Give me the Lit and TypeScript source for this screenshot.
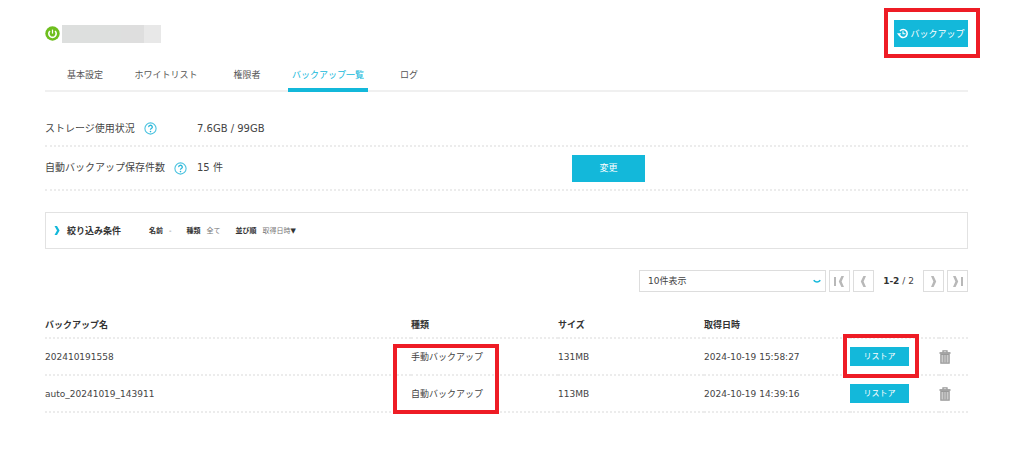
import { LitElement, html, svg, css } from "lit";
import { customElement, state } from "lit/decorators.js";
import { classMap } from "lit/directives/class-map.js";

interface Backup {
  name: string;
  type: string;
  size: string;
  date: string;
}

const TABS = ["基本設定", "ホワイトリスト", "権限者", "バックアップ一覧", "ログ"];

const BACKUPS: Backup[] = [
  { name: "202410191558", type: "手動バックアップ", size: "131MB", date: "2024-10-19 15:58:27" },
  { name: "auto_20241019_143911", type: "自動バックアップ", size: "113MB", date: "2024-10-19 14:39:16" },
];

const powerIcon = html`<svg width="15" height="15" viewBox="0 0 15 15" aria-hidden="true">
  <circle cx="7.5" cy="7.5" r="7.2" fill="#6ebe1e" />
  <path d="M4.9 5a3.7 3.7 0 1 0 5.2 0" fill="none" stroke="#fff" stroke-width="1.6" />
  <path d="M7.5 3.6v4" stroke="#fff" stroke-width="1.2" />
</svg>`;

const historyIcon = html`<svg width="11" height="11" viewBox="0 0 11 11" aria-hidden="true">
  <path d="M2.2 6.2A4 4 0 1 0 3 3" fill="none" stroke="#fff" stroke-width="1.5" />
  <path d="M0 5.2h4.2L2.1 8z" fill="#fff" />
  <path d="M6 3.2v2.6h2.4" fill="none" stroke="#fff" stroke-width="1.1" />
</svg>`;

const helpIcon = html`<svg width="13" height="13" viewBox="0 0 13 13" aria-hidden="true">
  <circle cx="6.5" cy="6.5" r="5.6" fill="#fff" stroke="#4cc3e0" stroke-width="1.1" />
  <path d="M4.7 5.1a1.8 1.7 0 1 1 2.6 1.4q-.8.4-.8 1.3" fill="none" stroke="#27b5d8" stroke-width="1.3" />
  <circle cx="6.5" cy="9.6" r=".8" fill="#27b5d8" />
</svg>`;

const trashIcon = html`<svg width="12" height="14" viewBox="0 0 12 14" aria-hidden="true">
  <path d="M4 2.4V.9h4v1.5" fill="none" stroke="#999" stroke-width="1.3" />
  <path d="M.5 3h11" stroke="#999" stroke-width="1.7" />
  <path d="M1.9 4.4h8.2v8.7H1.9z" fill="#d0d0d0" stroke="#999" stroke-width="1.3" />
  <path d="M4.4 5v7.6M6 5v7.6M7.6 5v7.6" stroke="#999" stroke-width=".8" />
</svg>`;

const left = svg`<path d="M5.4 0H8L5.6 5.5 8 11H5.4L2.8 5.5z" fill="#b8b8b8" />`;
const right = svg`<path d="M5.6 0H3L5.4 5.5 3 11H5.6L8.2 5.5z" fill="#b8b8b8" />`;
const PAGER = {
  first: svg`<path d="M0 1h2v9H0z" fill="#b8b8b8" /><g transform="translate(2)">${left}</g>`,
  prev: left,
  next: right,
  last: svg`<path d="M9 1h2v9H9z" fill="#b8b8b8" /><g transform="translate(-2)">${right}</g>`,
};

@customElement("app-root")
export class AppRoot extends LitElement {
  @state() private tab = 3;

  static styles = css`
    :host {
      display: block;
      padding: 20px 56px 56px 45px;
      background: #fff;
      color: #444;
      font: 9px/16px "DejaVu Sans", "Noto Sans CJK JP", sans-serif;
    }
    * { box-sizing: border-box; }
    svg { display: block; flex: none; }
    button, select { font: inherit; color: inherit; margin: 0; cursor: pointer; }
    button { padding: 0; border: 0; background: none; }
    .head { display: flex; justify-content: space-between; align-items: center; height: 27px; }
    .title { display: flex; align-items: center; gap: 2px; }
    .name {
      width: 99px;
      height: 18px;
      background: linear-gradient(90deg, #dddfde 0 60%, #dedede 60% 83%, #e8e8e8 83%);
    }
    .fill { background: #13b8da; color: #fff; display: flex; align-items: center; justify-content: center; }
    .backup { width: 74px; height: 27px; gap: 2px; }
    .framed { position: relative; }
    .frame {
      position: absolute;
      z-index: 1;
      border: 4px solid #ee1c25;
      pointer-events: none;
    }
    .frame-backup { inset: -12px -12px -11px -10px; }
    .frame-type { top: 5px; left: -18px; width: 106px; height: 70px; }
    .frame-restore { inset: -13px -10px -12px -7px; }
    .tabs { display: flex; gap: 1px; margin-top: 12px; height: 33px; border-bottom: 2px solid #f0f0f0; }
    .tab {
      width: 80px;
      height: 33px;
      line-height: 32px;
      text-align: center;
      white-space: nowrap;
      color: #555;
      text-decoration: none;
    }
    .tab.on { color: #13b8da; border-bottom: 4px solid #13b8da; }
    .settings { margin: 20px 0 0; font-size: 10px; }
    .row {
      display: grid;
      grid-template-columns: 152px 375px auto;
      align-items: center;
      justify-content: start;
      border-bottom: 2px dotted #ececec;
    }
    .row.usage { height: 35px; }
    .row.keep { height: 44px; }
    .term { display: flex; align-items: center; gap: 9px; }
    .value { margin: 0; }
    .change { width: 73px; height: 27px; font-size: 9px; }
    .filter {
      display: flex;
      align-items: center;
      width: 100%;
      height: 37px;
      margin-top: 21px;
      padding: 0 8px;
      border: 1px solid #e2e2e2;
      font-size: 7px;
      color: #777;
    }
    .filter b { color: #333; }
    .filter .lead { font-size: 9px; margin: 0 28px 0 7px; }
    .cond { display: flex; gap: 6px; margin-right: 15px; }
    .mark { color: #333; }
    .pager { display: flex; justify-content: flex-end; gap: 3px; margin-top: 21px; height: 22px; }
    .pick { position: relative; width: 187px; }
    .pick select {
      appearance: none;
      width: 100%;
      height: 22px;
      padding: 0 8px;
      border: 1px solid #ddd;
      border-radius: 0;
      background: #fff;
    }
    .pick svg { position: absolute; right: 5px; top: 9px; pointer-events: none; }
    .nav {
      display: flex;
      align-items: center;
      justify-content: center;
      width: 21px;
      height: 22px;
      border: 1px solid #ddd;
    }
    .range { width: 43px; line-height: 22px; text-align: center; white-space: nowrap; }
    .range b { color: #333; }
    table { width: 100%; margin-top: 21px; border-spacing: 0; table-layout: fixed; }
    th, td { padding: 0; text-align: left; border-bottom: 2px dotted #ececec; white-space: nowrap; }
    th { height: 26px; color: #333; }
    td { height: 37px; }
    .c-type { width: 147px; }
    .c-date { width: 146px; }
    .c-restore { width: 89px; }
    .c-del { width: 29px; }
    .restore { width: 59px; height: 19px; font-size: 8px; }
    .del { display: block; }
  `;

  private nav(kind: keyof typeof PAGER, label: string) {
    return html`<button class="nav" aria-label=${label}>
      <svg width="11" height="11" viewBox="0 0 11 11">${PAGER[kind]}</svg>
    </button>`;
  }

  render() {
    return html`
      <header class="head">
        <div class="title">${powerIcon}<div class="name"></div></div>
        <div class="framed">
          <button class="fill backup">${historyIcon}バックアップ</button>
          <div class="frame frame-backup"></div>
        </div>
      </header>

      <nav class="tabs">
        ${TABS.map(
          (t, i) => html`<a
            href="#"
            class=${classMap({ tab: true, on: i === this.tab })}
            @click=${(e: Event) => {
              e.preventDefault();
              this.tab = i;
            }}
            >${t}</a
          >`
        )}
      </nav>

      <dl class="settings">
        <div class="row usage">
          <dt class="term">ストレージ使用状況${helpIcon}</dt>
          <dd class="value">7.6GB / 99GB</dd>
        </div>
        <div class="row keep">
          <dt class="term">自動バックアップ保存件数${helpIcon}</dt>
          <dd class="value">15 件</dd>
          <dd class="value"><button class="fill change">変更</button></dd>
        </div>
      </dl>

      <button class="filter" aria-expanded="false">
        <svg width="6" height="9" viewBox="0 0 6 9">
          <path d="M.5 0H3L5.6 4.5 3 9H.5L3 4.5z" fill="#13b8da" />
        </svg>
        <b class="lead">絞り込み条件</b>
        <span class="cond"><b>名前</b><span>-</span></span>
        <span class="cond"><b>種類</b><span>全て</span></span>
        <span class="cond"><b>並び順</b><span>取得日時<span class="mark">▼</span></span></span>
      </button>

      <div class="pager">
        <div class="pick">
          <select aria-label="表示件数">
            <option>10件表示</option>
          </select>
          <svg width="8" height="5" viewBox="0 0 8 5">
            <path d="M.7 1.2Q4 4.8 7.3 1.2" fill="none" stroke="#13b8da" stroke-width="1.7" />
          </svg>
        </div>
        ${this.nav("first", "最初")} ${this.nav("prev", "前へ")}
        <div class="range"><b>1-2</b> / 2</div>
        ${this.nav("next", "次へ")} ${this.nav("last", "最後")}
      </div>

      <table>
        <colgroup>
          <col />
          <col class="c-type" />
          <col class="c-date" />
          <col class="c-date" />
          <col class="c-restore" />
          <col class="c-del" />
        </colgroup>
        <thead>
          <tr>
            <th>バックアップ名</th>
            <th>種類</th>
            <th>サイズ</th>
            <th>取得日時</th>
            <th></th>
            <th></th>
          </tr>
        </thead>
        <tbody>
          ${BACKUPS.map(
            (b, i) => html`<tr>
              <td>${b.name}</td>
              <td class="framed">${b.type}${i === 0 ? html`<div class="frame frame-type"></div>` : ""}</td>
              <td>${b.size}</td>
              <td>${b.date}</td>
              <td>
                <div class="framed restore">
                  <button class="fill restore">リストア</button>
                  ${i === 0 ? html`<div class="frame frame-restore"></div>` : ""}
                </div>
              </td>
              <td><button class="del" aria-label="削除">${trashIcon}</button></td>
            </tr>`
          )}
        </tbody>
      </table>
    `;
  }
}
